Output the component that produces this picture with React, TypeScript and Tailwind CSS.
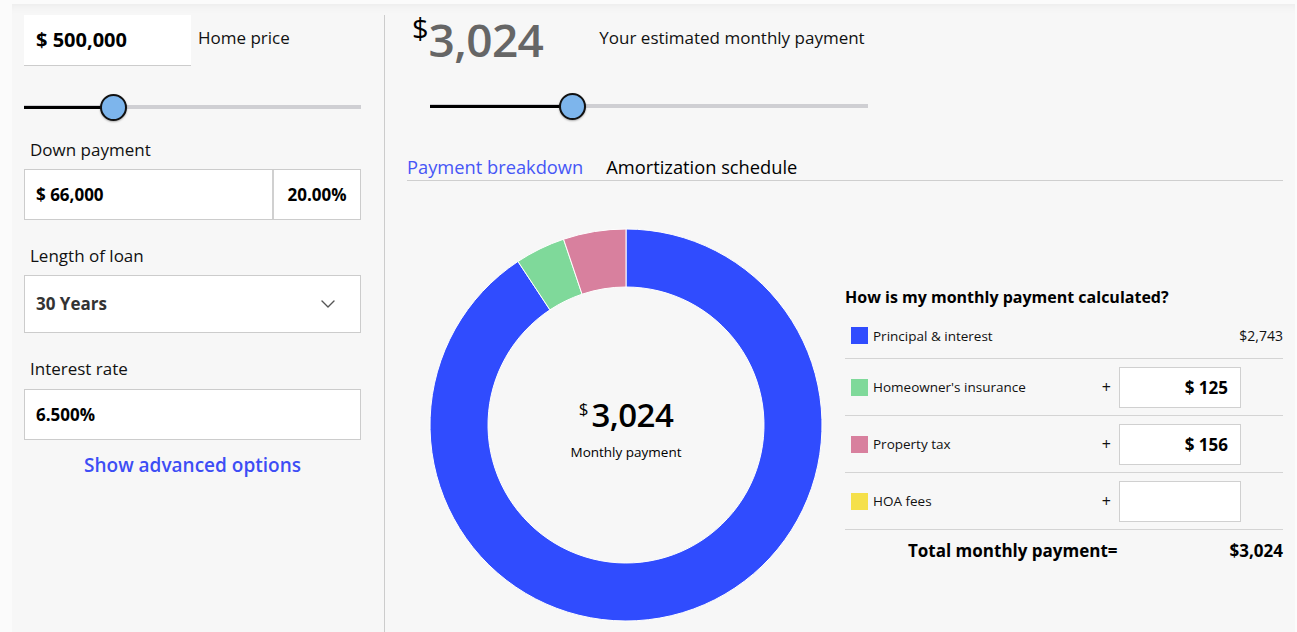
import { ChevronDown } from 'lucide-react';

const FONT = "font-['Open_Sans',sans-serif]";

type Slice = { value: number; color: string };

const slices: Slice[] = [
  { value: 2743, color: '#304cfe' },
  { value: 125, color: '#7fd99a' },
  { value: 156, color: '#d8809e' },
];

const arcPath = (
  cx: number,
  cy: number,
  r0: number,
  r1: number,
  a0: number,
  a1: number,
) => {
  const pt = (r: number, a: number) => {
    const rad = (a - 90) * (Math.PI / 180);
    return `${cx + r * Math.cos(rad)} ${cy + r * Math.sin(rad)}`;
  };
  const large = a1 - a0 > 180 ? 1 : 0;
  return [
    `M ${pt(r1, a0)}`,
    `A ${r1} ${r1} 0 ${large} 1 ${pt(r1, a1)}`,
    `L ${pt(r0, a1)}`,
    `A ${r0} ${r0} 0 ${large} 0 ${pt(r0, a0)}`,
    'Z',
  ].join(' ');
};

const Donut = () => {
  const total = slices.reduce((s, x) => s + x.value, 0);
  let start = 0;
  return (
    <div className="relative w-[396px] h-[396px]">
      <svg width="396" height="396" viewBox="0 0 396 396">
        {slices.map(s => {
          const sweep = (s.value / total) * 360;
          const d = arcPath(198, 198, 138, 196, start, start + sweep);
          start += sweep;
          return (
            <path key={s.color} d={d} fill={s.color} stroke="#ffffff" strokeWidth="1" />
          );
        })}
      </svg>
      <div className="absolute inset-0 flex flex-col items-center justify-center pt-[10px]">
        <div className="flex items-start text-black leading-none">
          <span className="text-[17px] mt-[2px] mr-[3px]">$</span>
          <span className="text-[33px] font-semibold tracking-[-0.5px]">3,024</span>
        </div>
        <div className="text-[13.5px] text-black mt-[11px]">Monthly payment</div>
      </div>
    </div>
  );
};

const Slider = ({ width, pos }: { width: number; pos: number }) => (
  <div className="relative h-[28px] flex items-center" style={{ width }}>
    <div className="w-full h-[4px] bg-[#cfcfd3]" />
    <div className="absolute left-0 h-[3px] bg-black" style={{ width: pos }} />
    <div
      className="absolute w-[27px] h-[27px] rounded-full bg-[#7db5ec] border-2 border-[#111] shadow-[0_1px_2px_rgba(0,0,0,0.3)]"
      style={{ left: pos - 13 }}
    />
  </div>
);

const Label = ({ children }: { children: React.ReactNode }) => (
  <div className="text-[17px] text-[#111] pl-[6px] leading-none">{children}</div>
);

const Row = ({
  color,
  label,
  value,
}: {
  color: string;
  label: string;
  value?: string;
}) => (
  <div className="flex items-center h-[57px] border-b border-[#d4d4d4]">
    <div className="w-[17px] h-[17px] ml-[6px]" style={{ background: color }} />
    <div className="ml-[5px] text-[13.5px] text-[#111] flex-1">{label}</div>
    <div className="text-[16px] text-[#111] mr-[8px]">+</div>
    <div className="w-[122px] h-[41px] bg-white border border-[#d0d0d0] flex items-center justify-end pr-[12px] text-[17px] font-bold text-black">
      {value}
    </div>
    <div className="w-[42px]" />
  </div>
);

export default function App() {
  return (
    <div className={`${FONT} bg-[#fbfbfb] w-[1297px] h-[632px] overflow-hidden pt-[4px]`}>
      <div className="ml-[12px] w-[1283px] h-[640px] bg-[#f7f7f7] shadow-[inset_0_10px_10px_-8px_rgba(0,0,0,0.05)] flex">
        {/* left column */}
        <div className="w-[373px] mt-[11px] border-r border-[#cccccc] pl-[12px] pr-[23px] flex flex-col">
          <div className="flex items-start">
            <div className="w-[167px] h-[51px] bg-white border-b border-[#cccccc] flex items-center pl-[12px] text-[20px] font-bold text-black">
              $ 500,000
            </div>
            <div className="ml-[7px] mt-[10px] text-[17px] text-[#111]">Home price</div>
          </div>
          <div className="mt-[27px]">
            <Slider width={337} pos={89} />
          </div>
          <div className="mt-[20px]">
            <Label>Down payment</Label>
          </div>
          <div className="mt-[11px] flex h-[51px] bg-white border border-[#cccccc]">
            <div className="flex-1 flex items-center pl-[11px] text-[17px] font-bold text-black border-r-2 border-[#d0d0d0]">
              $ 66,000
            </div>
            <div className="w-[86px] flex items-center justify-center text-[17px] font-bold text-black">
              20.00%
            </div>
          </div>
          <div className="mt-[27px]">
            <Label>Length of loan</Label>
          </div>
          <div className="mt-[11px] h-[58px] bg-white border border-[#cccccc] flex items-center justify-between pl-[11px] pr-[20px]">
            <span className="text-[17px] font-bold text-[#333]">30 Years</span>
            <ChevronDown className="w-[24px] h-[24px] text-[#555]" strokeWidth={1.4} />
          </div>
          <div className="mt-[27px]">
            <Label>Interest rate</Label>
          </div>
          <div className="mt-[12px] h-[51px] bg-white border border-[#cccccc] flex items-center pl-[11px] text-[17px] font-bold text-black">
            6.500%
          </div>
          <div className="mt-[11px] text-center text-[19px] font-semibold text-[#3d4df5]">
            Show advanced options
          </div>
        </div>

        {/* right column */}
        <div className="flex-1 flex flex-col pl-[22px] pr-[12px]">
          <div className="flex items-start mt-[8px]">
            <div className="flex items-start leading-none ml-[5px]">
              <span className="text-[29px] text-black mt-[1px]">$</span>
              <span className="text-[46px] font-semibold text-[#666] mt-[4px] tracking-[-0.6px]">3,024</span>
            </div>
            <div className="ml-[56px] mt-[13px] text-[17px] text-[#111]">
              Your estimated monthly payment
            </div>
          </div>
          <div className="mt-[30px] ml-[23px]">
            <Slider width={438} pos={142} />
          </div>
          <div className="mt-[33px] flex items-end border-b border-[#cfcfcf]">
            <span className="text-[18.3px] text-[#4656f6]">Payment breakdown</span>
            <span className="ml-[23px] text-[18.3px] text-black">Amortization schedule</span>
          </div>
          <div className="flex">
            <div className="ml-[21px] mt-[46px]">
              <Donut />
            </div>
            <div className="ml-[21px] mt-[108px] flex-1 flex flex-col">
              <div className="text-[16px] font-bold text-black leading-none">
                How is my monthly payment calculated?
              </div>
              <div className="flex items-center h-[46px] border-b border-[#d4d4d4] mt-[8px]">
                <div className="w-[17px] h-[17px] ml-[6px] bg-[#304cfe]" />
                <div className="ml-[5px] text-[13.5px] text-[#111] flex-1">Principal &amp; interest</div>
                <div className="text-[14px] text-[#111]">$2,743</div>
              </div>
              <Row color="#7fd99a" label="Homeowner's insurance" value="$ 125" />
              <Row color="#d8809e" label="Property tax" value="$ 156" />
              <Row color="#f5e04a" label="HOA fees" />
              <div className="flex items-center h-[40px] text-[17px] font-bold text-black">
                <span className="ml-[63px] flex-1">Total monthly payment=</span>
                <span>$3,024</span>
              </div>
            </div>
          </div>
        </div>
      </div>
    </div>
  );
}
